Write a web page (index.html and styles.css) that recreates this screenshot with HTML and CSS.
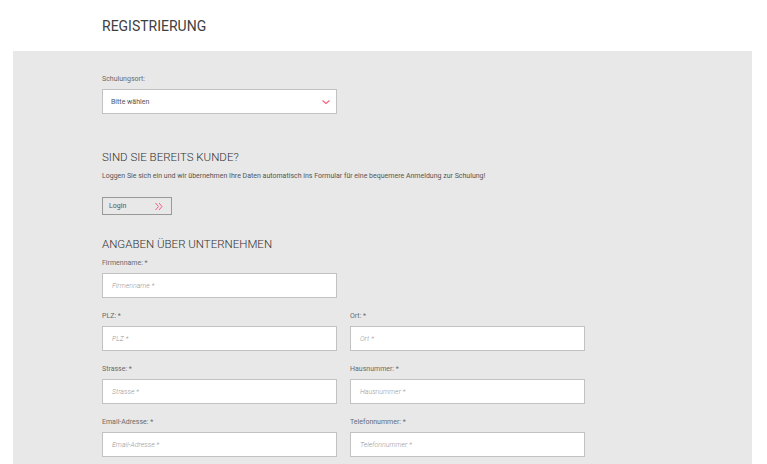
FILE: index.html
```html
<!DOCTYPE html>
<html>
<head>
    <title>Registrierung</title>
    <link rel="stylesheet" href="styles.css">
</head>
<body>
    <header class="page-head">
        <h1>REGISTRIERUNG</h1>
    </header>

    <div class="panel">
        <div class="field">
            <label>Schulungsort:</label>
            <div class="select">
                <span>Bitte wählen</span>
                <svg class="chevron" width="10" height="6" viewBox="0 0 10 6"><path d="M1.5 1.5 L5 4.5 L8.5 1.5" fill="none" stroke="#f0607a" stroke-width="1.1"/></svg>
            </div>
        </div>

        <h2 class="section-title first">SIND SIE BEREITS KUNDE?</h2>
        <p class="hint">Loggen Sie sich ein und wir übernehmen Ihre Daten automatisch ins Formular für eine bequemere Anmeldung zur Schulung!</p>
        <button class="login">
            <span>Login</span>
            <svg width="9" height="9" viewBox="0 0 9 9"><path d="M1.5 1 L4.5 4.5 L1.5 8 M5 1 L8 4.5 L5 8" fill="none" stroke="#f0607a" stroke-width="1"/></svg>
        </button>

        <h2 class="section-title">ANGABEN ÜBER UNTERNEHMEN</h2>
        <div class="row">
            <div class="field">
                <label>Firmenname: *</label>
                <input type="text" placeholder="Firmenname *">
            </div>
        </div>
        <div class="row">
            <div class="field">
                <label>PLZ: *</label>
                <input type="text" placeholder="PLZ *">
            </div>
            <div class="field">
                <label>Ort: *</label>
                <input type="text" placeholder="Ort *">
            </div>
        </div>
        <div class="row">
            <div class="field">
                <label>Strasse: *</label>
                <input type="text" placeholder="Strasse *">
            </div>
            <div class="field">
                <label>Hausnummer: *</label>
                <input type="text" placeholder="Hausnummer *">
            </div>
        </div>
        <div class="row">
            <div class="field">
                <label>Email-Adresse: *</label>
                <input type="text" placeholder="Email-Adresse *">
            </div>
            <div class="field">
                <label>Telefonnummer: *</label>
                <input type="text" placeholder="Telefonnummer *">
            </div>
        </div>
    </div>
</body>
</html>
```

FILE: styles.css
```css
body {
    margin: 0;
    font-family: Roboto, "Liberation Sans", Arial, sans-serif;
    color: #444;
    background: #fff;
}

.page-head {
    height: 51px;
    padding-left: 102px;
    display: flex;
    align-items: center;
}

.page-head h1 {
    margin: 0;
    font-size: 14px;
    font-weight: 400;
    color: #404040;
}

.panel {
    margin-left: 13px;
    width: 739px;
    min-height: 420px;
    background-color: #e8e8e8;
    padding: 23px 0 0 89px;
    box-sizing: border-box;
}

.field {
    width: 235px;
}

.field label {
    display: block;
    font-size: 7px;
    line-height: 10px;
    color: #6a6a6a;
    margin-bottom: 5px;
}

.select {
    height: 25px;
    box-sizing: border-box;
    background: #fff;
    border: 1px solid #c2c2c2;
    display: flex;
    align-items: center;
    justify-content: space-between;
    padding: 0 5px 0 8px;
    font-size: 7px;
    color: #555;
}

.chevron {
    flex-shrink: 0;
}

.section-title {
    margin: 22px 0 0;
    font-size: 11.5px;
    line-height: 14px;
    font-weight: 300;
    color: #333;
}

.section-title.first {
    margin-top: 36px;
}

.hint {
    margin: 7px 0 0;
    font-size: 7px;
    line-height: 10px;
    color: #555;
}

.login {
    margin: 16px 0 0;
    width: 70px;
    height: 18px;
    box-sizing: border-box;
    border: 1px solid #999;
    background: transparent;
    display: flex;
    align-items: center;
    padding: 0 8px 0 6px;
    justify-content: space-between;
    font-family: inherit;
    font-size: 7px;
    color: #555;
}

.section-title + .row {
    margin-top: 7px;
}

.row {
    display: flex;
    gap: 13px;
    margin-bottom: 13px;
}

.row input {
    display: block;
    width: 100%;
    height: 25px;
    box-sizing: border-box;
    margin: 0;
    border: 1px solid #c2c2c2;
    background: #fff;
    padding: 0 9px;
    font-family: inherit;
    font-size: 7px;
    outline: none;
}

.row input::placeholder {
    font-style: italic;
    font-weight: 300;
    color: #999;
}
```
